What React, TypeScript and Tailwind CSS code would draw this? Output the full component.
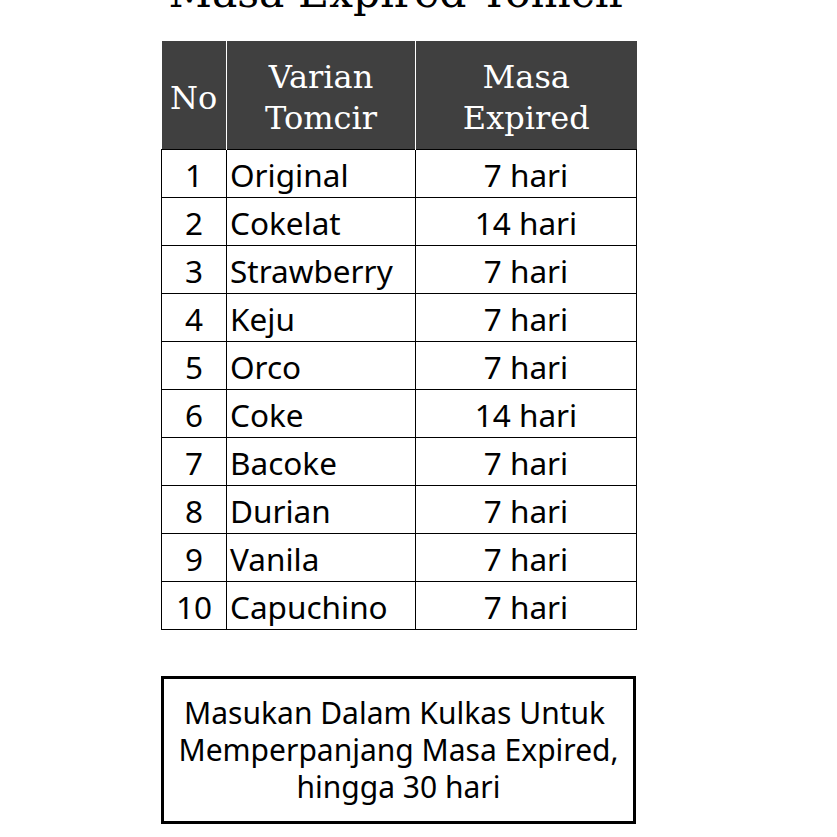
const rows = [
  { no: 1, name: "Original", exp: "7 hari" },
  { no: 2, name: "Cokelat", exp: "14 hari" },
  { no: 3, name: "Strawberry", exp: "7 hari" },
  { no: 4, name: "Keju", exp: "7 hari" },
  { no: 5, name: "Orco", exp: "7 hari" },
  { no: 6, name: "Coke", exp: "14 hari" },
  { no: 7, name: "Bacoke", exp: "7 hari" },
  { no: 8, name: "Durian", exp: "7 hari" },
  { no: 9, name: "Vanila", exp: "7 hari" },
  { no: 10, name: "Capuchino", exp: "7 hari" },
];

const serif = "font-['DejaVu_Serif','Liberation_Serif',serif]";
const sans = "font-['Noto_Sans','DejaVu_Sans',sans-serif]";

export default function App() {
  return (
    <div className="h-[837px] w-[837px] overflow-hidden bg-white text-black">
      <div className="ml-[161px] w-[475px]">
        <h1
          className={`${serif} -mt-[28px] h-[42px] whitespace-nowrap text-center text-[42.5px] leading-[42px] font-normal`}
        >
          Masa Expired Tomcir
        </h1>

        <table className="mt-[27px] w-[475px] table-fixed border-collapse">
          <colgroup>
            <col className="w-[65px]" />
            <col className="w-[189px]" />
            <col className="w-[221px]" />
          </colgroup>
          <thead>
            <tr className={`${serif} h-[108px] bg-[#404040] text-[32px] leading-[41px] font-normal text-white`}>
              <th className="border-r border-white p-0 pt-[7px] font-normal">No</th>
              <th className="border-r border-white p-0 pt-[7px] font-normal">
                Varian
                <br />
                Tomcir
              </th>
              <th className="p-0 pt-[7px] font-normal">
                Masa
                <br />
                Expired
              </th>
            </tr>
          </thead>
          <tbody className={`${sans} text-[31.5px]`}>
            {rows.map((r) => (
              <tr key={r.no} className="h-[48px]">
                <td className="border border-black p-0 pt-[3px] text-center leading-none">{r.no}</td>
                <td className="border border-black py-0 pt-[3px] pl-[3px] leading-none">{r.name}</td>
                <td className="border border-black p-0 pt-[3px] text-center leading-none">{r.exp}</td>
              </tr>
            ))}
          </tbody>
        </table>

        <div
          className={`${sans} mt-[46px] flex h-[148px] flex-col justify-center border-[3px] border-black text-center text-[30px] leading-[37px]`}
        >
          <p className="whitespace-pre">Masukan Dalam Kulkas Untuk </p>
          <p>Memperpanjang Masa Expired,</p>
          <p>hingga 30 hari</p>
        </div>
      </div>
    </div>
  );
}
